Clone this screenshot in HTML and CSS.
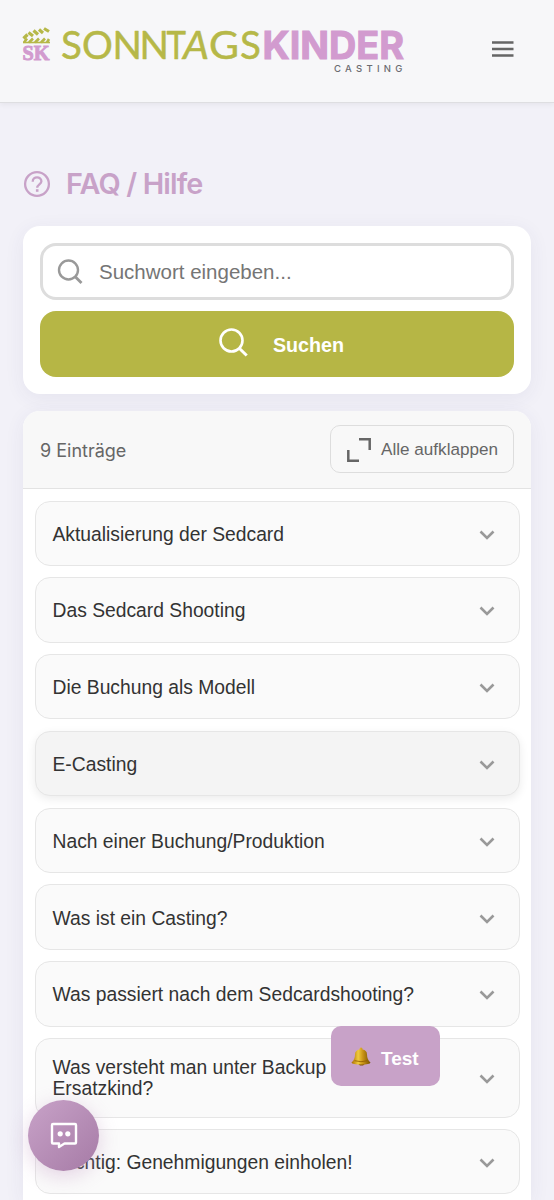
FILE: index.html
```html
<!DOCTYPE html>
<html lang="de">
<head>
<meta charset="utf-8">
<title>FAQ / Hilfe</title>
<link rel="stylesheet" href="styles.css">
</head>
<body>
<header class="topbar">
  <svg class="logo" width="384" height="55" viewBox="0 0 384 55">
    <g fill="none" stroke="#b6b848">
      <path stroke-width="3.200" d="M1.500 18.500 5.500 14.500M6.500 12.500 11 16M11.500 10.500 16 14.500M17 9.500 21 13M22 8.500 27 11.500"/>
      <path stroke-width="2.600" d="M2 22.500 5 18.500M7 22.500 11 18.500M13 22.500 17 18.500M19 22.500 23 18.500M25 22.500 27 19"/>
      <path stroke-width="1.600" d="M1 22.500H28"/>
    </g>
    <text class="logo-mark" x="0.500" y="39.700" textLength="27" lengthAdjust="spacingAndGlyphs">SK</text>
    <text class="logo-thin" y="38.500" x="39 60 90.500 117.500">SONN</text>
    <text class="logo-thin" y="38.500" x="144.500" textLength="19.500" lengthAdjust="spacingAndGlyphs">T</text>
    <text class="logo-thin logo-slant" y="38.500" x="161" textLength="26" lengthAdjust="spacingAndGlyphs">A</text>
    <text class="logo-thin" y="38.500" x="187" textLength="30" lengthAdjust="spacingAndGlyphs">G</text>
    <text class="logo-thin" y="38.500" x="218">S</text>
    <text class="logo-bold" x="240.500" y="38.500" textLength="141.500" lengthAdjust="spacingAndGlyphs">KINDER</text>
    <text class="logo-sub" x="312" y="52">CASTING</text>
  </svg>
  <svg class="burger" width="22" height="16" viewBox="0 0 22 16"><path d="M0 1.400H21.500M0 8H21.500M0 14.600H21.500" stroke="#666" stroke-width="2.500"/></svg>
</header>

<main class="page">
  <h1 class="title">
    <svg width="28" height="28" viewBox="0 0 28 28" fill="none" stroke="#c8a2c8" stroke-width="2.300"><circle cx="14" cy="14" r="11.900"/><path d="M9.700 11.700C9.700 5.800 18.400 6 18.400 11.300C18.400 14.200 14.200 14.500 14.200 17.800"/><path d="M12.900 20.500H15.500" stroke-width="2.600"/></svg>
    <span>FAQ / Hilfe</span>
  </h1>

  <section class="search card">
    <div class="field">
      <svg width="26" height="26" viewBox="0 0 26 26" fill="none" stroke="#999" stroke-width="2.400"><circle cx="11.500" cy="11" r="9.500"/><path d="M18 17.500 24.500 24" stroke-width="2.800"/></svg>
      <span>Suchwort eingeben...</span>
    </div>
    <button class="submit">
      <svg width="29" height="29" viewBox="0 0 29 29" fill="none" stroke="#fff" stroke-width="2.600"><circle cx="12.500" cy="12.500" r="11"/><path d="M20 20 27.700 27.500" stroke-width="3"/></svg>
      <span>Suchen</span>
    </button>
  </section>

  <section class="results card">
    <div class="results-head">
      <span class="count">9 Einträge</span>
      <button class="expand">
        <svg width="24" height="24" viewBox="0 0 24 24" fill="none" stroke="#666" stroke-width="2.500"><path d="M12 1.300H22.700V12M1.300 12V22.700H12"/></svg>
        <span>Alle aufklappen</span>
      </button>
    </div>
    <div class="list">
      <div class="item"><span>Aktualisierung der Sedcard</span><svg class="chev" width="16" height="10" viewBox="0 0 16 10"><path d="M1.500 1.500 8 8 14.500 1.500"/></svg></div>
      <div class="item"><span>Das Sedcard Shooting</span><svg class="chev" width="16" height="10" viewBox="0 0 16 10"><path d="M1.500 1.500 8 8 14.500 1.500"/></svg></div>
      <div class="item"><span>Die Buchung als Modell</span><svg class="chev" width="16" height="10" viewBox="0 0 16 10"><path d="M1.500 1.500 8 8 14.500 1.500"/></svg></div>
      <div class="item active"><span>E-Casting</span><svg class="chev" width="16" height="10" viewBox="0 0 16 10"><path d="M1.500 1.500 8 8 14.500 1.500"/></svg></div>
      <div class="item"><span>Nach einer Buchung/Produktion</span><svg class="chev" width="16" height="10" viewBox="0 0 16 10"><path d="M1.500 1.500 8 8 14.500 1.500"/></svg></div>
      <div class="item"><span>Was ist ein Casting?</span><svg class="chev" width="16" height="10" viewBox="0 0 16 10"><path d="M1.500 1.500 8 8 14.500 1.500"/></svg></div>
      <div class="item"><span>Was passiert nach dem Sedcardshooting?</span><svg class="chev" width="16" height="10" viewBox="0 0 16 10"><path d="M1.500 1.500 8 8 14.500 1.500"/></svg></div>
      <div class="item tall"><span>Was versteht man unter Backup<br>Ersatzkind?</span><svg class="chev" width="16" height="10" viewBox="0 0 16 10"><path d="M1.500 1.500 8 8 14.500 1.500"/></svg></div>
      <div class="item"><span>Wichtig: Genehmigungen einholen!</span><svg class="chev" width="16" height="10" viewBox="0 0 16 10"><path d="M1.500 1.500 8 8 14.500 1.500"/></svg></div>
    </div>
  </section>
</main>

<button class="test">
  <svg width="20" height="20" viewBox="0 0 20 20">
    <defs><linearGradient id="brass"><stop offset="0" stop-color="#a96b00"/><stop offset=".35" stop-color="#f0cb3d"/><stop offset=".6" stop-color="#c99315"/><stop offset="1" stop-color="#755000"/></linearGradient></defs>
    <ellipse cx="10.500" cy="16.800" rx="3" ry="1.800" fill="#7b4b08"/>
    <path d="M8.500 2.500Q8.300 .5 10 .5T11.500 2.500Q16 3.300 16 7.500Q16 12.500 19.500 15.500Q19 17.500 10 17.500T.5 15.500Q4 12.500 4 7.500Q4 3.300 8.500 2.500Z" fill="url(#brass)"/>
    <path d="M3.500 13.700Q10 15.700 16.500 13.700" fill="none" stroke="#8c5700" stroke-width=".8"/>
  </svg>
  <span>Test</span>
</button>

<button class="chat">
  <svg width="28" height="28" viewBox="0 0 28 28"><path d="M3 2H25Q26 2 26 3V20.500Q26 21.500 25 21.500H14.500L9 25V21.500H3Q2 21.500 2 20.500V3Q2 2 3 2Z" fill="none" stroke="#fff" stroke-width="2.400" stroke-linejoin="round"/><circle cx="10.200" cy="11.800" r="2.600" fill="#fff"/><circle cx="17.800" cy="11.800" r="2.600" fill="#fff"/></svg>
</button>
</body>
</html>
```
FILE: styles.css
```css
* { box-sizing: border-box; }

body {
  margin: 0;
  height: 1200px;
  overflow: hidden;
  position: relative;
  background: #f2f1f8;
  font-family: "Liberation Sans", Arial, sans-serif;
  color: #333;
}

button { margin: 0; border: 0; font-family: inherit; }
svg { flex: none; overflow: visible; }

.topbar {
  display: flex;
  justify-content: space-between;
  align-items: flex-start;
  height: 103px;
  padding: 20px 40px 0 22px;
  background: #f7f7f9;
  border-bottom: 1px solid #dedee1;
  box-shadow: 0 2px 5px rgba(0, 0, 0, .05);
}
.burger { margin-top: 21px; }

.logo-mark { font: 700 22px "Liberation Serif", serif; fill: #d29bcf; stroke: #d29bcf; stroke-width: 1px; }
.logo-thin { font: 400 38.500px Lato, sans-serif; fill: #b6b848; stroke: #b6b848; stroke-width: .5px; stroke-linejoin: round; }
.logo-slant { font-style: italic; }
.logo-bold { font: 700 38px Inter, sans-serif; fill: #d29bcf; stroke: #d29bcf; stroke-width: 1px; }
.logo-sub { font: 500 9.500px Inter, sans-serif; letter-spacing: 4.300px; fill: #6b6b70; }

.page { padding: 61px 23px 0; }

.title {
  display: flex;
  align-items: center;
  gap: 15px;
  height: 40px;
  margin: 0 0 22px;
  font: 600 28.800px/40px Inter, sans-serif;
  color: #c8a2c8;
}
.title span { letter-spacing: -.85px; }

.card {
  background: #fff;
  border-radius: 17px;
  box-shadow: 0 4px 20px rgba(60, 50, 110, .07);
}

.search {
  display: flex;
  flex-direction: column;
  gap: 11px;
  height: 168px;
  padding: 17px;
}
.field {
  display: flex;
  align-items: center;
  gap: 16px;
  height: 57px;
  padding: 0 14px;
  border: 3px solid #ddd;
  border-radius: 16px;
  font-size: 20.500px;
  color: #757575;
}
.submit {
  display: flex;
  align-items: center;
  justify-content: center;
  gap: 25px;
  height: 66px;
  padding: 0 0 0 9px;
  border-radius: 16px;
  background: #b6b645;
  font: 700 19.700px "Liberation Sans", Arial, sans-serif;
  color: #fff;
}
.submit svg { margin-top: -4px; }
.submit span { padding-top: 3px; }

.results {
  height: 789px;
  margin-top: 17px;
  border-radius: 17px 17px 0 0;
  overflow: hidden;
}
.results-head {
  display: flex;
  justify-content: space-between;
  align-items: center;
  height: 78px;
  padding: 0 17px;
  background: #f8f8f8;
  border-bottom: 1px solid #e3e3e3;
}
.count { padding-top: 1px; font: 400 18px Inter, sans-serif; color: #666; }
.expand {
  display: flex;
  align-items: center;
  gap: 10px;
  height: 48px;
  margin-top: -1px;
  padding: 1px 15px 0 16px;
  border: 1.300px solid #ddd;
  border-radius: 10px;
  background: #f8f8f8;
  font-size: 17.100px;
  color: #666;
}

.list {
  display: flex;
  flex-direction: column;
  gap: 11.500px;
  padding: 11.500px;
}
.item {
  display: flex;
  flex: none;
  align-items: center;
  justify-content: space-between;
  height: 65.300px;
  padding: 0 23.500px 0 17px;
  border: 1.300px solid #e6e6e6;
  border-radius: 15px;
  background: #fafafa;
  font-size: 19.300px;
  line-height: 21px;
}
.item span { padding-top: 2px; }
.item.active { background: #f4f4f4; box-shadow: 0 3px 10px rgba(0, 0, 0, .08); }
.item.tall { height: 79.500px; }
.item.tall span { padding-top: 0; }
.chev { margin-top: 3px; fill: none; stroke: #999; stroke-width: 2.600px; }

.test {
  position: absolute;
  left: 331px;
  top: 1026px;
  display: flex;
  align-items: center;
  gap: 10px;
  width: 109px;
  height: 60px;
  padding: 5px 20px 0 20px;
  border-radius: 10px;
  background: #c8a2c8;
  font-size: 19px;
  font-weight: 700;
  color: #fff;
}
.test svg { margin-top: -3px; }
.chat {
  position: absolute;
  left: 28px;
  top: 1100px;
  display: flex;
  align-items: center;
  justify-content: center;
  width: 71px;
  height: 71px;
  padding: 0;
  border-radius: 50%;
  background: linear-gradient(135deg, #c8a2c8, #a67ba6);
  box-shadow: 0 5px 20px rgba(200, 162, 200, .45);
}
```
